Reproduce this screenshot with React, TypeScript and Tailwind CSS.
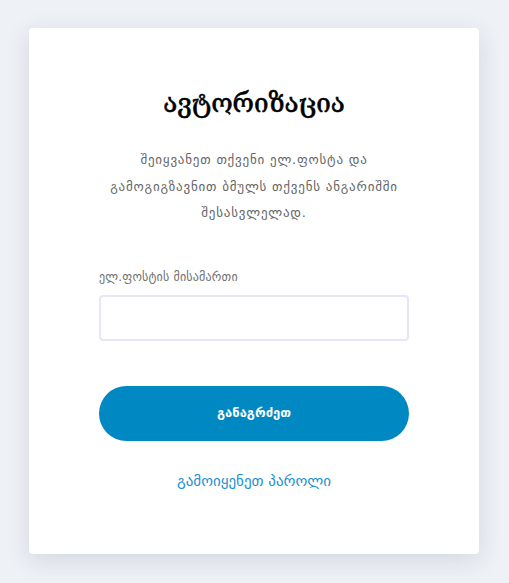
export default function App() {
  return (
    <div className="min-h-screen bg-[#eef1f6] pt-[28px] pl-[29px] font-['DejaVu_Sans',sans-serif]">
      <div className="w-[450px] h-[526px] bg-white rounded-[4px] shadow-[0_6px_24px_rgba(40,55,90,0.14)] px-[70px] pt-[58px] flex flex-col items-center">
        <h1 className="font-['DejaVu_Serif',serif] text-[26px] text-black leading-[34px] [-webkit-text-stroke:0.6px_black]">ავტორიზაცია</h1>
        <p className="mt-[27px] text-[13px] tracking-[0.8px] leading-[26.5px] text-[#666] text-center">
          შეიყვანეთ თქვენი ელ.ფოსტა და გამოგიგზავნით ბმულს თქვენს ანგარიშში შესასვლელად.
        </p>
        <div className="w-full mt-[42px]">
          <label className="block text-[12px] tracking-[0.2px] text-[#707070] leading-[16px]">ელ.ფოსტის მისამართი</label>
          <input
            type="email"
            className="mt-[10px] w-full h-[46px] border-2 border-[#e6e6fa] rounded-[4px] outline-none px-3 text-sm"
          />
        </div>
        <button className="mt-[45px] w-full h-[55px] rounded-full bg-[#0088c2] text-white text-[13px] font-bold">
          განაგრძეთ
        </button>
        <a href="#" className="mt-[30px] text-[15px] leading-[20px] text-[#1a90d2]">
          გამოიყენეთ პაროლი
        </a>
      </div>
    </div>
  );
}
